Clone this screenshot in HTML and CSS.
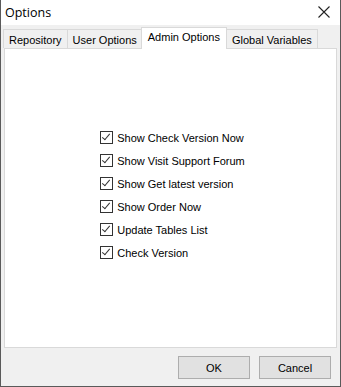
FILE: index.html
```html
<!DOCTYPE html>
<html lang="en">
<head>
    <meta charset="utf-8">
    <title>Options</title>
    <link rel="stylesheet" href="styles.css">
</head>
<body>
    <div class="window">
        <div class="titlebar">
            <span class="title">Options</span>
            <span class="close">
                <svg width="12" height="12" viewBox="0 0 12 12"><path d="M0.5 0.5L11.5 11.5M11.5 0.5L0.5 11.5" stroke="#222" stroke-width="1.1"/></svg>
            </span>
        </div>
        <div class="body">
            <div class="tabs">
                <div class="tab">Repository</div>
                <div class="tab">User Options</div>
                <div class="tab active">Admin Options</div>
                <div class="tab">Global Variables</div>
            </div>
            <div class="panel">
                <ul class="checks">
                    <li><span class="box"></span>Show Check Version Now</li>
                    <li><span class="box"></span>Show Visit Support Forum</li>
                    <li><span class="box"></span>Show Get latest version</li>
                    <li><span class="box"></span>Show Order Now</li>
                    <li><span class="box"></span>Update Tables List</li>
                    <li><span class="box"></span>Check Version</li>
                </ul>
            </div>
            <div class="buttons">
                <button>OK</button>
                <button>Cancel</button>
            </div>
        </div>
    </div>
</body>
</html>
```

FILE: styles.css
```css
body {
    margin: 0;
    padding: 0;
    background-color: #fff;
    font-family: "Liberation Sans", Arial, sans-serif;
    font-size: 11px;
    color: #000;
}

.window {
    width: 341px;
    height: 387px;
    box-sizing: border-box;
    border: 1px solid #5a5a5a;
    border-top: none;
    display: flex;
    flex-direction: column;
}

.titlebar {
    height: 25px;
    background-color: #fff;
    display: flex;
    align-items: center;
    justify-content: space-between;
    padding: 0 10px 0 4px;
}

.title {
    font-family: "Open Sans", sans-serif;
    font-size: 12.5px;
    margin-top: -1px;
}

.close {
    display: flex;
    margin-top: -1px;
}

.body {
    flex: 1;
    background-color: #f0f0f0;
    display: flex;
    flex-direction: column;
    padding: 2px 3px 0 2px;
}

.tabs {
    display: flex;
    align-items: flex-end;
    height: 21px;
    position: relative;
    z-index: 1;
}

.tab {
    height: 19px;
    box-sizing: border-box;
    padding: 4px 5px 0 5px;
    background-color: #f0f0f0;
    border: 1px solid #d9d9d9;
    border-bottom: none;
    margin-right: -1px;
    white-space: nowrap;
}

.tab.active {
    height: 22px;
    background-color: #fff;
    padding: 3px 6px 0 6px;
    margin: 0 -1px -1px -1px;
    position: relative;
    z-index: 2;
}

.panel {
    height: 298px;
    background-color: #fff;
    border: 1px solid #d9d9d9;
    margin-left: 1px;
    display: flex;
    align-items: center;
    justify-content: center;
}

.checks {
    list-style: none;
    margin: 0;
    padding: 0 0 6px 4px;
}

.checks li {
    display: flex;
    align-items: center;
    height: 23px;
}

.box {
    width: 11px;
    height: 11px;
    border: 1px solid #333;
    margin-right: 4px;
    position: relative;
    background-color: #fff;
}

.box::after {
    content: "";
    position: absolute;
    left: 3px;
    top: 0px;
    width: 3px;
    height: 7px;
    border: solid #333;
    border-width: 0 1px 1px 0;
    transform: rotate(40deg);
}

.buttons {
    display: flex;
    justify-content: flex-end;
    gap: 9px;
    padding: 8px 6px 0 0;
}

.buttons button {
    width: 72px;
    height: 23px;
    background-color: #e1e1e1;
    border: 1px solid #adadad;
    font-family: "Liberation Sans", Arial, sans-serif;
    font-size: 11px;
    color: #000;
    padding: 0;
}
```
